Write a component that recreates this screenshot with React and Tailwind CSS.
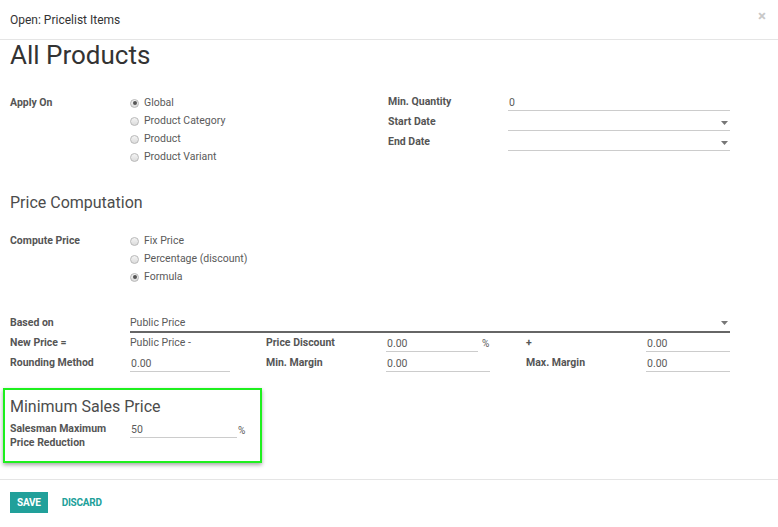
import React from "react";

const font = { fontFamily: "Roboto, 'Liberation Sans', sans-serif" };

function Radio({ label, checked }) {
  return (
    <div className="flex items-center h-[18px]">
      <span className="w-[9px] h-[9px] rounded-full border border-[#b8b8b8] bg-gradient-to-b from-[#f4f4f4] to-[#dcdcdc] flex items-center justify-center">
        {checked && <span className="w-[4px] h-[4px] rounded-full bg-[#555]" />}
      </span>
      <span className="ml-[5px] text-[10.5px] text-[#5a5a5a]">{label}</span>
    </div>
  );
}

function Caret() {
  return (
    <svg width="7" height="4" viewBox="0 0 7 4" className="mr-[2px]">
      <path d="M0 0h7L3.5 4z" fill="#777" />
    </svg>
  );
}

function Field({ value = "", w = "w-[222px]", caret }) {
  return (
    <div
      className={`${w} h-[18px] flex items-center justify-between border-b border-[#ccc] text-[10.5px] text-[#5a5a5a] pl-[1px] pt-[2px]`}
    >
      <span>{value}</span>
      {caret && <Caret />}
    </div>
  );
}

function Label({ children, w = "w-[120px]" }) {
  return <div className={`${w} shrink-0 text-[10.5px] font-bold text-[#555]`}>{children}</div>;
}

export default function App() {
  return (
    <div style={font} className="w-[778px] h-[527px] bg-white text-[#4c4c4c] overflow-hidden">
      {/* header */}
      <div className="h-[40px] flex items-center justify-between px-[10px] border-b border-[#e5e5e5]">
        <span className="text-[12px] text-[#333]">Open: Pricelist Items</span>
        <span className="text-[15px] leading-none text-[#c8c8c8] mr-[2px] -mt-[6px] font-bold">×</span>
      </div>

      <div className="px-[10px]">
        <h1 className="text-[26px] leading-[30px] text-[#333] h-[30px]">All Products</h1>

        {/* apply on */}
        <div className="flex mt-[23px]">
          <div className="w-[378px] flex mt-[1px]">
            <div className="w-[120px] h-[18px] flex items-center">
              <Label>Apply On</Label>
            </div>
            <div>
              <Radio label="Global" checked />
              <Radio label="Product Category" />
              <Radio label="Product" />
              <Radio label="Product Variant" />
            </div>
          </div>
          <div className="flex flex-col">
            {[
              ["Min. Quantity", "0", false],
              ["Start Date", "", true],
              ["End Date", "", true],
            ].map(([l, v, c]) => (
              <div key={l} className="flex h-[20px] items-start">
                <div className="h-[18px] flex items-center">
                  <Label>{l}</Label>
                </div>
                <Field value={v} caret={c} />
              </div>
            ))}
          </div>
        </div>

        <h2 className="mt-[25px] h-[24px] leading-[24px] text-[16px] text-[#4c4c4c]">Price Computation</h2>

        <div className="flex mt-[17px]">
          <div className="w-[120px] h-[18px] flex items-center">
            <Label>Compute Price</Label>
          </div>
          <div>
            <Radio label="Fix Price" />
            <Radio label="Percentage (discount)" />
            <Radio label="Formula" checked />
          </div>
        </div>

        {/* formula */}
        <div className="mt-[28px]">
          <div className="flex h-[20px] items-start">
            <div className="h-[18px] flex items-center">
              <Label>Based on</Label>
            </div>
            <div className="w-[600px] h-[19px] border-b-2 border-[#666] flex items-center justify-between text-[10.5px] text-[#5a5a5a]">
              <span>Public Price</span>
              <Caret />
            </div>
          </div>
          <div className="flex h-[20px] items-start">
            <div className="h-[18px] flex items-center">
              <Label>New Price =</Label>
            </div>
            <div className="w-[136px] h-[18px] flex items-center text-[10.5px] text-[#5a5a5a]">Public Price -</div>
            <div className="h-[18px] flex items-center">
              <Label>Price Discount</Label>
            </div>
            <Field value="0.00" w="w-[92px]" />
            <div className="w-[48px] h-[18px] flex items-center pl-[4px] text-[10px] text-[#5a5a5a]">%</div>
            <div className="h-[18px] flex items-center">
              <Label>+</Label>
            </div>
            <Field value="0.00" w="w-[84px]" />
          </div>
          <div className="flex h-[20px] items-start">
            <div className="h-[18px] flex items-center">
              <Label>Rounding Method</Label>
            </div>
            <Field value="0.00" w="w-[100px]" />
            <div className="w-[36px]" />
            <div className="h-[18px] flex items-center">
              <Label>Min. Margin</Label>
            </div>
            <Field value="0.00" w="w-[104px]" />
            <div className="w-[36px]" />
            <div className="h-[18px] flex items-center">
              <Label>Max. Margin</Label>
            </div>
            <Field value="0.00" w="w-[84px]" />
          </div>
        </div>

        {/* minimum sales price */}
        <div className="mt-[14px] -ml-[7px] w-[259px] h-[75px] border-2 border-[#1ef01e] shadow-[0_2px_4px_rgba(0,0,0,0.35)] pl-[5px] pt-[7px]">
          <div className="text-[16px] leading-[20px] text-[#4c4c4c]">Minimum Sales Price</div>
          <div className="flex mt-[5px]">
            <div className="w-[120px] text-[10.5px] leading-[14px] font-bold text-[#555]">
              Salesman Maximum
              <br />
              Price Reduction
            </div>
            <div className="w-[107px] h-[16px] border-b border-[#ccc] text-[10.5px] text-[#5a5a5a] pl-[1px] leading-[16px]">50</div>
            <div className="pl-[1px] text-[10px] leading-[18px] text-[#5a5a5a]">%</div>
          </div>
        </div>
      </div>

      {/* footer */}
      <div className="mt-[16px] border-t border-[#e5e5e5] px-[10px] pt-[12px] flex items-center gap-[14px]">
        <button className="h-[21px] px-[7px] bg-[#21a09a] text-white text-[10px] font-bold tracking-tight">SAVE</button>
        <button className="text-[10px] font-bold text-[#21a09a] tracking-tight">DISCARD</button>
      </div>
    </div>
  );
}
